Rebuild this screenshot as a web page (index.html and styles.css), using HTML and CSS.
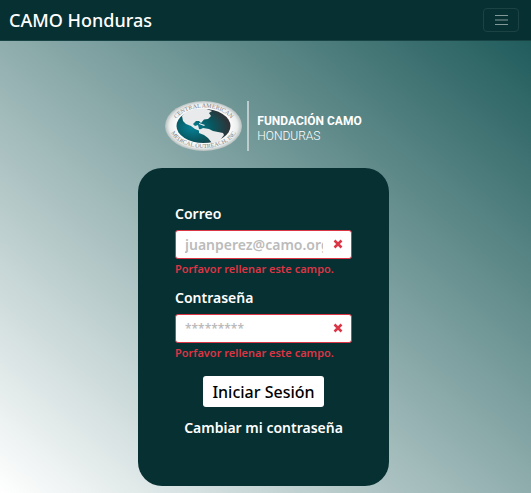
FILE: index.html
```html
<!DOCTYPE html>
<html lang="es">
<head>
<meta charset="utf-8">
<meta name="viewport" content="width=device-width, initial-scale=1">
<title>CAMO Honduras</title>
<link rel="stylesheet" href="styles.css">
</head>
<body>
<header class="navbar">
  <a class="brand" href="#">CAMO Honduras</a>
  <button class="toggler" type="button" aria-label="Menú">
    <svg width="20" height="20" viewBox="0 0 20 20" aria-hidden="true"><path d="M4 5.500h13M4 10h13M4 14.500h13" stroke="#fff" stroke-opacity=".5" stroke-width="1.200"/></svg>
  </button>
</header>
<main class="page">
  <div class="logo">
    <svg class="seal" width="77" height="50" viewBox="0 0 77 50" aria-hidden="true">
      <defs>
        <radialGradient id="rim"><stop offset=".65" stop-color="#fff"/><stop offset=".88" stop-color="#eceeee"/><stop offset="1" stop-color="#b4bebe"/></radialGradient>
        <radialGradient id="sea" cx=".3" cy=".55" r=".72"><stop offset="0" stop-color="#078197"/><stop offset=".5" stop-color="#075861"/><stop offset="1" stop-color="#332f32"/></radialGradient>
        <path id="top" d="M8 27a30.500 20.500 0 0 1 61 0"/>
        <path id="bottom" d="M4.500 25a34 22 0 0 0 68 0"/>
      </defs>
      <ellipse cx="38.500" cy="25" rx="38.500" ry="25" fill="url(#rim)"/>
      <ellipse cx="38.500" cy="25" rx="27" ry="17" fill="url(#sea)"/>
      <g fill="#e9eaeb">
        <path d="M17 15 21 11 29 8 40 7.500 47 10 44 12 46 15 43 18 39 18.500 36 22 34 20 31 20 28 23 30 25 33 24 34 28 37 29 35 30 30 28 26 25 21 23 18 20Z"/>
        <path d="M34 29 38 27 44 28 48 30 58 32 59 34 56 38 54 41 50 42 47 42 43 37 39 34 34 32Z"/>
        <path d="m34 22 6 2-1 1-5-2Z"/>
      </g>
      <text class="seal-text"><textPath href="#top" startOffset="50%" text-anchor="middle">CENTRAL AMERICAN</textPath></text>
      <text class="seal-text"><textPath href="#bottom" startOffset="50%" text-anchor="middle">MEDICAL OUTREACH, INC</textPath></text>
    </svg>
    <div class="logo-text"><strong>FUNDACIÓN CAMO</strong><span>HONDURAS</span></div>
  </div>
  <form class="card" novalidate>
    <div class="field">
      <label for="correo">Correo</label>
      <div class="control">
        <input id="correo" type="email" placeholder="juanperez@camo.org" aria-describedby="correo-error">
        <svg class="cross" viewBox="0 0 10 10" aria-hidden="true"><path d="m1.500 1.500 7 7m0-7-7 7"/></svg>
      </div>
      <p class="error" id="correo-error">Porfavor rellenar este campo.</p>
    </div>
    <div class="field">
      <label for="clave">Contraseña</label>
      <div class="control">
        <input id="clave" type="password" placeholder="*********" aria-describedby="clave-error">
        <svg class="cross" viewBox="0 0 10 10" aria-hidden="true"><path d="m1.500 1.500 7 7m0-7-7 7"/></svg>
      </div>
      <p class="error" id="clave-error">Porfavor rellenar este campo.</p>
    </div>
    <button class="submit" type="button">Iniciar Sesión</button>
    <a class="change" href="#">Cambiar mi contraseña</a>
  </form>
</main>
</body>
</html>
```
FILE: styles.css
```css
* { box-sizing: border-box; }
body {
  margin: 0;
  min-height: 100vh;
  display: flex;
  flex-direction: column;
  font-family: "Noto Sans", "Open Sans", sans-serif;
  font-weight: 600;
  color: #fff;
}
a { color: inherit; text-decoration: none; }
.navbar {
  display: flex;
  justify-content: space-between;
  align-items: center;
  padding: 8px 12px 8px 9px;
  background: #073032;
  border-bottom: 1px solid #184445;
}
.brand { font-size: 18px; line-height: 22px; font-weight: 500; }
.toggler {
  display: flex;
  justify-content: center;
  align-items: center;
  width: 36px;
  height: 24px;
  padding: 0;
  background: none;
  border: 1px solid #1c4244;
  border-radius: 4px;
}
.page {
  flex: 1;
  display: flex;
  flex-direction: column;
  align-items: center;
  padding: 60px 16px 7px 12px;
  background: linear-gradient(to top right, #fff, #215c5c);
}
.logo { display: flex; margin-bottom: 17px; }
.seal { margin-right: 5px; }
.seal-text { font-family: "Liberation Serif", serif; font-size: 6px; font-weight: 400; fill: #7b8384; }
.logo-text {
  display: flex;
  flex-direction: column;
  justify-content: center;
  padding: 5px 0 0 8px;
  border-left: 2px solid #bccccc;
  font-family: Roboto, sans-serif;
  font-size: 12px;
  line-height: 15px;
}
.logo-text strong { font-weight: 700; }
.logo-text span { font-weight: 300; }
.card {
  display: flex;
  flex-direction: column;
  align-items: center;
  width: 100%;
  max-width: 251px;
  padding: 36px 37px 48px;
  background: #073032;
  border-radius: 24px;
}
.field { width: 100%; margin-bottom: 12px; }
.field label { display: block; margin-bottom: 6px; font-size: 14px; line-height: 20px; }
.control { display: flex; position: relative; }
.control input {
  width: 100%;
  height: 29px;
  padding: 0 28px 0 9px;
  border: 1px solid #dc3545;
  border-radius: 3px;
  background: #fff;
  font: inherit;
  font-size: 14px;
}
.control input::placeholder { color: #bbb; opacity: 1; }
.control input[type="password"] { font-size: 12px; }
.cross { position: absolute; right: 9px; top: 9px; width: 10px; height: 10px; fill: none; stroke: #dc3545; stroke-width: 2.500; }
.error { margin: 3px 0 0; color: #dc3545; font-size: 11px; line-height: 14px; }
.submit {
  margin-top: 4px;
  height: 31px;
  padding: 0 9px;
  border: 0;
  border-radius: 3px;
  background: #fff;
  color: #000;
  font: inherit;
  font-size: 16px;
  font-weight: 500;
}
.change { margin-top: 11px; font-size: 14px; line-height: 20px; }
```
